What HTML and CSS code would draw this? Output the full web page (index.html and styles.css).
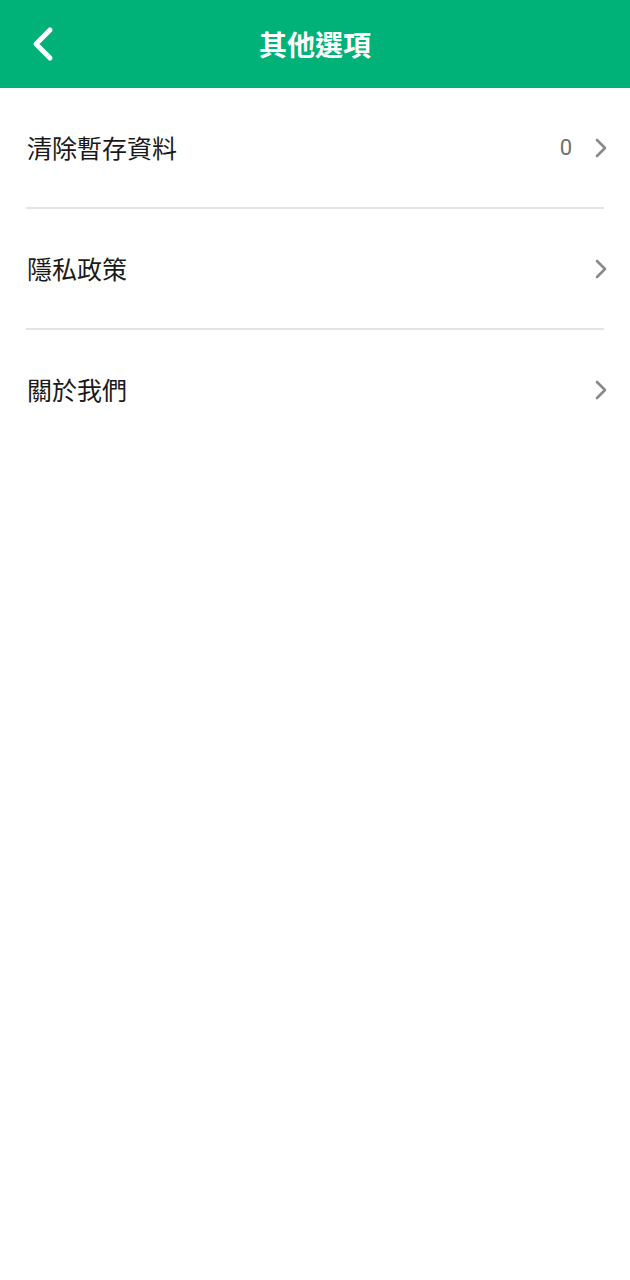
FILE: index.html
```html
<!DOCTYPE html>
<html lang="zh-Hant">
<head>
<meta charset="utf-8">
<link rel="stylesheet" href="styles.css">
</head>
<body>
<header class="bar">
  <button class="back" aria-label="返回">
    <svg width="26" height="36" viewBox="0 0 26 36"><path d="M20 4 L6 18 L20 32" fill="none" stroke="#fff" stroke-width="5" stroke-linecap="round" stroke-linejoin="round"/></svg>
  </button>
  <h1 class="title">其他選項</h1>
</header>
<ul class="list">
  <li class="row"><span class="label">清除暫存資料</span><span class="value">0</span><svg class="chev" width="14" height="20" viewBox="0 0 14 20"><path d="M3 2 L11 10 L3 18" fill="none" stroke="#8a8a8a" stroke-width="2.6" stroke-linecap="round" stroke-linejoin="round"/></svg></li>
  <li class="row"><span class="label">隱私政策</span><svg class="chev" width="14" height="20" viewBox="0 0 14 20"><path d="M3 2 L11 10 L3 18" fill="none" stroke="#8a8a8a" stroke-width="2.6" stroke-linecap="round" stroke-linejoin="round"/></svg></li>
  <li class="row"><span class="label">關於我們</span><svg class="chev" width="14" height="20" viewBox="0 0 14 20"><path d="M3 2 L11 10 L3 18" fill="none" stroke="#8a8a8a" stroke-width="2.6" stroke-linecap="round" stroke-linejoin="round"/></svg></li>
</ul>
</body>
</html>
```
FILE: styles.css
```css
html, body { margin: 0; padding: 0; background: #fff; }
body { font-family: "Noto Sans CJK TC", "Noto Sans", sans-serif; }
.bar {
  height: 88px;
  background: #00b277;
  display: flex;
  align-items: center;
  justify-content: center;
  position: relative;
}
.back {
  position: absolute;
  left: 30px;
  top: 26px;
  background: none;
  border: 0;
  padding: 0;
  display: flex;
}
.title {
  margin: 0;
  color: #fff;
  font-size: 28px;
  font-weight: 700;
}
.list { list-style: none; margin: 0; padding: 0 26px; }
.row {
  height: 119px;
  display: flex;
  align-items: center;
  border-bottom: 2px solid #e4e4e4;
}
.row:last-child { border-bottom: 0; }
.label {
  flex: 1;
  font-size: 25px;
  color: #1a1a1a;
  padding-left: 1px;
  margin-top: -2px;
}
.value {
  font-family: "Roboto", sans-serif;
  font-size: 22px;
  color: #6f6f6f;
  margin-right: 22px;
}
.chev { margin-right: -4px; }
```
